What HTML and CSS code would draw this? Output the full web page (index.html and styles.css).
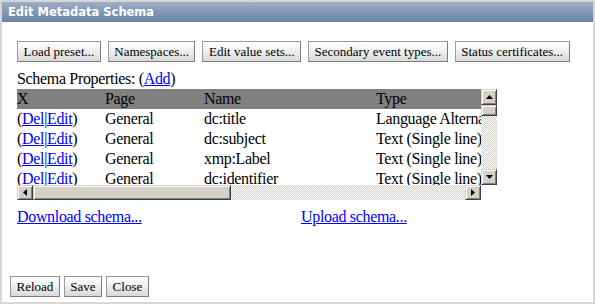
FILE: index.html
```html
<!DOCTYPE html>
<html>
<head>
<meta charset="utf-8">
<link rel="stylesheet" href="styles.css">
</head>
<body>
<div class="dialog">
  <div class="titlebar">Edit Metadata Schema</div>
  <div class="content">
    <div class="toolbar">
      <button class="btn">Load preset...</button>
      <button class="btn">Namespaces...</button>
      <button class="btn">Edit value sets...</button>
      <button class="btn">Secondary event types...</button>
      <button class="btn">Status certificates...</button>
    </div>
    <div class="props-label">Schema Properties: (<a href="#">Add</a>)</div>
    <div class="scrollbox">
      <div class="viewport">
        <table class="grid">
          <colgroup><col class="c-x"><col class="c-page"><col class="c-name"><col class="c-type"></colgroup>
          <thead>
            <tr><th>X</th><th>Page</th><th>Name</th><th>Type</th></tr>
          </thead>
          <tbody>
            <tr><td>(<a href="#">Del</a><span class="pipe">|</span><a href="#">Edit</a>)</td><td>General</td><td>dc:title</td><td>Language Alternative</td></tr>
            <tr><td>(<a href="#">Del</a><span class="pipe">|</span><a href="#">Edit</a>)</td><td>General</td><td>dc:subject</td><td>Text (Single line)</td></tr>
            <tr><td>(<a href="#">Del</a><span class="pipe">|</span><a href="#">Edit</a>)</td><td>General</td><td>xmp:Label</td><td>Text (Single line)</td></tr>
            <tr><td>(<a href="#">Del</a><span class="pipe">|</span><a href="#">Edit</a>)</td><td>General</td><td>dc:identifier</td><td>Text (Single line)</td></tr>
          </tbody>
        </table>
      </div>
      <div class="vscroll">
        <div class="sb-btn"><svg width="7" height="4" viewBox="0 0 7 4"><path d="M0 4 L3.5 0 L7 4 Z" fill="#000"/></svg></div>
        <div class="sb-thumb v"></div>
        <div class="sb-track"></div>
        <div class="sb-btn"><svg width="7" height="4" viewBox="0 0 7 4"><path d="M0 0 L7 0 L3.5 4 Z" fill="#000"/></svg></div>
      </div>
      <div class="hscroll">
        <div class="sb-btn"><svg width="4" height="7" viewBox="0 0 4 7"><path d="M4 0 L4 7 L0 3.5 Z" fill="#000"/></svg></div>
        <div class="sb-thumb h"></div>
        <div class="sb-track"></div>
        <div class="sb-btn"><svg width="4" height="7" viewBox="0 0 4 7"><path d="M0 0 L4 3.5 L0 7 Z" fill="#000"/></svg></div>
      </div>
      <div class="corner"></div>
    </div>
    <div class="links">
      <a href="#">Download schema...</a>
      <a href="#">Upload schema...</a>
    </div>
  </div>
  <div class="footer">
    <button class="btn">Reload</button>
    <button class="btn">Save</button>
    <button class="btn">Close</button>
  </div>
</div>
</body>
</html>
```

FILE: styles.css
```css
html, body {
  margin: 0;
  padding: 0;
  background: #d6d6d6;
  height: 304px;
  overflow: hidden;
}
body {
  padding: 2px;
  box-sizing: border-box;
  font-family: "Liberation Serif", "Times New Roman", serif;
  font-size: 16px;
  letter-spacing: -0.33px;
  color: #000;
}
.dialog {
  background: #fff;
  height: 300px;
  display: flex;
  flex-direction: column;
}
.titlebar {
  height: 19px;
  padding-top: 1px;
  padding-left: 6px;
  line-height: 19px;
  background: linear-gradient(#9dadc4, #6783a5);
  color: #fff;
  font-family: "DejaVu Sans", Verdana, sans-serif;
  font-weight: bold;
  font-size: 11.5px;
  letter-spacing: 0;
  white-space: nowrap;
}
.content {
  padding: 19px 15px 0 15px;
}
.toolbar {
  display: flex;
  gap: 7px;
}
.btn {
  height: 21px;
  margin: 0;
  padding: 0 5.5px;
  border: 1px solid #9a9a9a;
  border-right-color: #7d7d7d;
  border-bottom-color: #7d7d7d;
  background: linear-gradient(#ffffff, #f2f2f2 40%, #d9d9d9);
  font-family: "Liberation Serif", "Times New Roman", serif;
  font-size: 13px;
  letter-spacing: 0;
  color: #000;
  line-height: 19px;
  white-space: nowrap;
}
a {
  color: #0000ff;
  text-decoration: underline;
}
.props-label {
  margin-top: 7px;
  height: 20px;
  line-height: 20px;
}
.scrollbox {
  display: grid;
  grid-template-columns: 464px 16px;
  grid-template-rows: 96px 15px;
  width: 480px;
}
.viewport {
  overflow: hidden;
}
.grid {
  border-collapse: collapse;
  table-layout: fixed;
  width: 1040px;
}
.c-x { width: 88px; }
.c-page { width: 99px; }
.c-name { width: 172px; }
.grid th, .grid td {
  padding: 1px 0;
  line-height: 18px;
  text-align: left;
  font-weight: normal;
  white-space: nowrap;
  overflow: hidden;
}
.grid thead tr {
  background: #808080;
}
.pipe {
  text-decoration: underline;
  text-decoration-color: #0000ff;
}
.vscroll {
  display: flex;
  flex-direction: column;
}
.hscroll {
  display: flex;
}
.sb-btn {
  box-sizing: border-box;
  width: 16px;
  height: 16px;
  flex: none;
  background: #d4d0c8;
  border: 1px solid;
  border-color: #d4d0c8 #404040 #404040 #d4d0c8;
  box-shadow: inset 1px 1px #fff, inset -1px -1px #808080;
  display: flex;
  align-items: center;
  justify-content: center;
}
.hscroll .sb-btn {
  height: 15px;
}
.sb-thumb {
  box-sizing: border-box;
  flex: none;
  background: #d4d0c8;
  border: 1px solid;
  border-color: #d4d0c8 #404040 #404040 #d4d0c8;
  box-shadow: inset 1px 1px #fff, inset -1px -1px #808080;
}
.sb-thumb.v {
  height: 11px;
}
.sb-thumb.h {
  width: 198px;
}
.sb-track {
  flex: 1;
  background-color: #fff;
  background-image: repeating-conic-gradient(#d4d0c8 0 25%, #fff 0 50%);
  background-size: 2px 2px;
}
.corner {
  background: #fff;
}
.links {
  margin-top: 8px;
  display: grid;
  grid-template-columns: 284px auto;
  line-height: 18px;
}
.links a {
  justify-self: start;
}
.footer {
  margin-top: auto;
  padding: 0 0 5px 8px;
  display: flex;
  gap: 4px;
}
```
